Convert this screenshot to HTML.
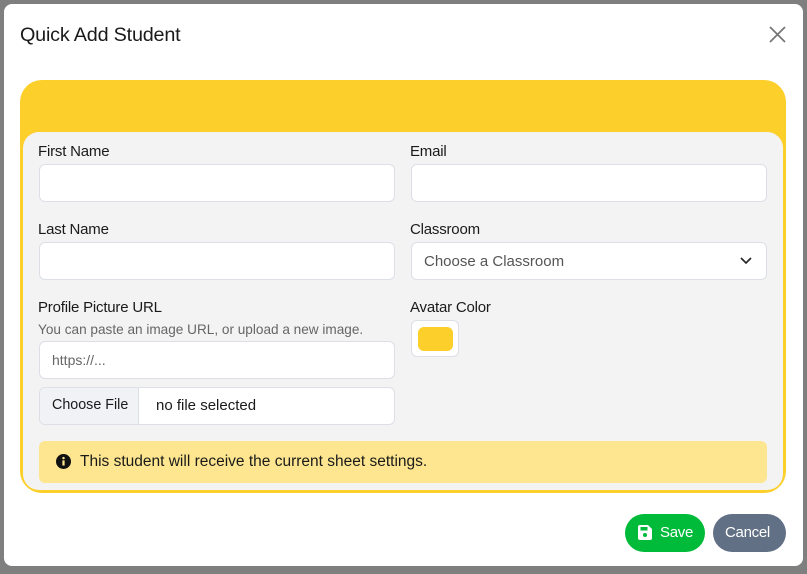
<!DOCTYPE html>
<html><head><meta charset="utf-8">
<style>
*{box-sizing:border-box;margin:0;padding:0}
body{width:807px;height:574px;background:#7f7f7f;position:relative;overflow:hidden;font-family:"Liberation Sans",sans-serif;color:#1a1a1a}
.modal{position:absolute;left:4px;top:4px;width:799px;height:562px;background:#fff;border-radius:8px}
.a{position:absolute}
.title{left:20px;top:24px;font-size:19.8px;letter-spacing:-0.2px}
.card{left:20px;top:80px;width:766px;height:413px;background:#fdcf2b;border-radius:22px}
.inner{left:23px;top:132px;width:760px;height:358px;background:#f3f3f4;border-radius:16px}
.lbl{font-size:15px;letter-spacing:-0.2px}
.inp{background:#fff;border:1px solid #dcdfe5;border-radius:6px;height:38px;width:356px}
.ph{font-size:15px;color:#666;position:absolute;left:12px;top:10px}
.alert{left:39px;top:441px;width:728px;height:42px;background:#fde68f;border-radius:6px}
.btn{border-radius:19px;color:#fff;font-size:15px;height:38px;top:514px;letter-spacing:-0.3px}
</style></head><body>
<div class="modal"></div>
<div class="a title">Quick Add Student</div>
<svg class="a" style="left:768px;top:25px" width="19" height="19" viewBox="0 0 19 19"><path d="M2 2L17 17M17 2L2 17" stroke="#777" stroke-width="1.8"/></svg>
<div class="a card"></div>
<div class="a inner"></div>

<div class="a lbl" style="left:38px;top:143px">First Name</div>
<div class="a inp" style="left:39px;top:164px"></div>
<div class="a lbl" style="left:410px;top:143px">Email</div>
<div class="a inp" style="left:411px;top:164px"></div>

<div class="a lbl" style="left:38px;top:221px">Last Name</div>
<div class="a inp" style="left:39px;top:242px"></div>
<div class="a lbl" style="left:410px;top:221px">Classroom</div>
<div class="a inp" style="left:411px;top:242px"><span class="ph" style="color:#555">Choose a Classroom</span>
<svg class="a" style="left:328px;top:14px" width="12" height="8" viewBox="0 0 12 8"><path d="M1 1L6 6L11 1" stroke="#222" stroke-width="1.6" fill="none"/></svg></div>

<div class="a lbl" style="left:38px;top:299px">Profile Picture URL</div>
<div class="a" style="left:38px;top:322px;font-size:13.6px;color:#666">You can paste an image URL, or upload a new image.</div>
<div class="a inp" style="left:39px;top:341px"><span class="ph" style="font-size:14px">https://...</span></div>
<div class="a inp" style="left:39px;top:387px;overflow:hidden"><div class="a" style="left:0;top:0;width:99px;height:36px;background:#f1f2f5;border-right:1px solid #dcdfe5"></div><span class="a" style="left:12px;top:9px;font-size:14.3px">Choose File</span><span class="a" style="left:116px;top:9px;font-size:15px">no file selected</span></div>

<div class="a lbl" style="left:410px;top:299px">Avatar Color</div>
<div class="a" style="left:411px;top:320px;width:48px;height:37px;background:#fff;border:1px solid #dcdfe5;border-radius:6px"><div class="a" style="left:6px;top:6px;width:35px;height:24px;background:#fdcf2b;border-radius:6px"></div></div>

<div class="a alert"><svg class="a" style="left:17px;top:13px" width="15" height="15" viewBox="0 0 16 16"><circle cx="8" cy="8" r="8" fill="#111"/><rect x="6.8" y="6.8" width="2.4" height="5.5" fill="#fde68f"/><circle cx="8" cy="4.4" r="1.3" fill="#fde68f"/></svg><span class="a" style="left:41px;top:12px;font-size:15.5px">This student will receive the current sheet settings.</span></div>

<div class="a btn" style="left:625px;width:80px;background:#00bb3a">
<svg class="a" style="left:13px;top:11px" width="14" height="15" viewBox="0 0 14 15"><path d="M0 2a2 2 0 0 1 2-2h8l4 4v9a2 2 0 0 1-2 2H2a2 2 0 0 1-2-2z" fill="#fff"/><rect x="2.5" y="2" width="7" height="3.5" fill="#00bb3a"/><circle cx="7" cy="10" r="2" fill="#00bb3a"/></svg>
<span class="a" style="left:35px;top:10px">Save</span></div>
<div class="a btn" style="left:713px;width:73px;background:#627085"><span class="a" style="left:12px;top:10px">Cancel</span></div>
</body></html>
